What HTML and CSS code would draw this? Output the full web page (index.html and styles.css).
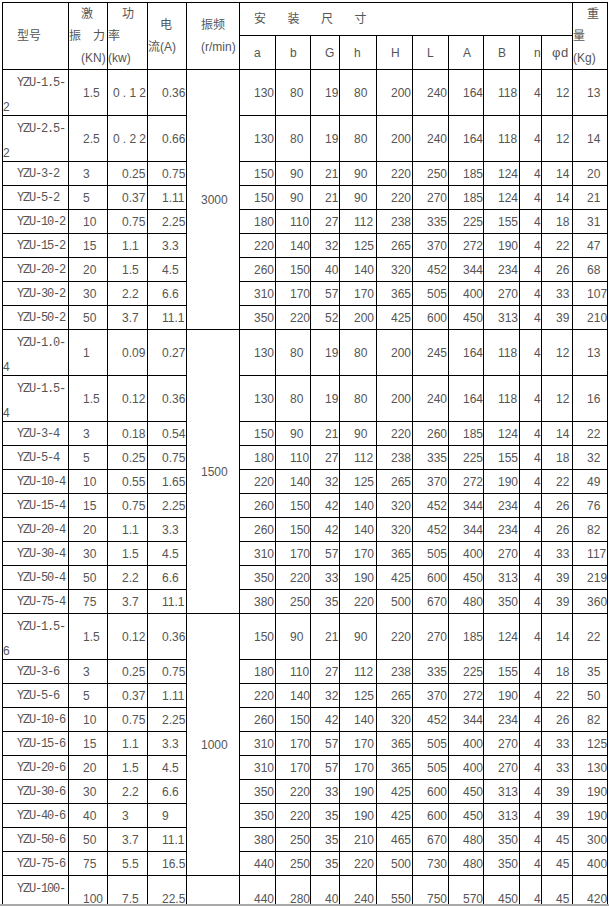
FILE: index.html
```html
<!DOCTYPE html>
<html lang="zh-CN">
<head>
<meta charset="utf-8">
<title>YZU 振动电机技术参数</title>
<link rel="stylesheet" href="styles.css">
</head>
<body>
<div class="page">
<table class="spec">
<colgroup>
<col class="w66"><col class="w39"><col class="w40"><col class="w39"><col class="w53">
<col class="w36"><col class="w35"><col class="w29"><col class="w37"><col class="w36">
<col class="w36"><col class="w35"><col class="w36"><col class="w22"><col class="w31"><col class="w35">
</colgroup>
<thead>
<tr class="h1">
<th rowspan="2" class="ml"><div class="i14">型号</div></th>
<th rowspan="2" class="ml"><div class="i12">激</div><div>振　力</div><div class="i12">(KN)</div></th>
<th rowspan="2" class="ml"><div class="i14">功</div><div>率</div><div>(kw)</div></th>
<th rowspan="2" class="ml"><div class="i12">电</div><div>流(A)</div></th>
<th rowspan="2" class="ml"><div class="i14">振频</div><div class="i14">(r/min)</div></th>
<th colspan="10" class="wide">安装尺寸</th>
<th rowspan="2" class="ml"><div class="i14">重</div><div>量</div><div>(Kg)</div></th>
</tr>
<tr class="h2">
<th>a</th><th>b</th><th>G</th><th>h</th><th>H</th><th>L</th><th>A</th><th>B</th><th>n</th><th class="phi">φd</th>
</tr>
</thead>
<tbody>
<tr class="d"><td class="m"><div class="two">YZU-1.5-<br><span class="a">2</span></div></td><td>1.5</td><td class="ls">0.12</td><td>0.36</td><td rowspan="9">3000</td><td>130</td><td>80</td><td>19</td><td>80</td><td>200</td><td>240</td><td>164</td><td>118</td><td>4</td><td>12</td><td>13</td></tr>
<tr class="d"><td class="m"><div class="two">YZU-2.5-<br><span class="a">2</span></div></td><td>2.5</td><td class="ls">0.22</td><td>0.66</td><td>130</td><td>80</td><td>19</td><td>80</td><td>200</td><td>240</td><td>164</td><td>118</td><td>4</td><td>12</td><td>14</td></tr>
<tr class="s"><td class="m">YZU-3-2</td><td>3</td><td>0.25</td><td>0.75</td><td>150</td><td>90</td><td>21</td><td>90</td><td>220</td><td>250</td><td>185</td><td>124</td><td>4</td><td>14</td><td>20</td></tr>
<tr class="s"><td class="m">YZU-5-2</td><td>5</td><td>0.37</td><td>1.11</td><td>150</td><td>90</td><td>21</td><td>90</td><td>220</td><td>270</td><td>185</td><td>124</td><td>4</td><td>14</td><td>21</td></tr>
<tr class="s"><td class="m">YZU-10-2</td><td>10</td><td>0.75</td><td>2.25</td><td>180</td><td>110</td><td>27</td><td>112</td><td>238</td><td>335</td><td>225</td><td>155</td><td>4</td><td>18</td><td>31</td></tr>
<tr class="s"><td class="m">YZU-15-2</td><td>15</td><td>1.1</td><td>3.3</td><td>220</td><td>140</td><td>32</td><td>125</td><td>265</td><td>370</td><td>272</td><td>190</td><td>4</td><td>22</td><td>47</td></tr>
<tr class="s"><td class="m">YZU-20-2</td><td>20</td><td>1.5</td><td>4.5</td><td>260</td><td>150</td><td>40</td><td>140</td><td>320</td><td>452</td><td>344</td><td>234</td><td>4</td><td>26</td><td>68</td></tr>
<tr class="s"><td class="m">YZU-30-2</td><td>30</td><td>2.2</td><td>6.6</td><td>310</td><td>170</td><td>57</td><td>170</td><td>365</td><td>505</td><td>400</td><td>270</td><td>4</td><td>33</td><td>107</td></tr>
<tr class="s"><td class="m">YZU-50-2</td><td>50</td><td>3.7</td><td>11.1</td><td>350</td><td>220</td><td>52</td><td>200</td><td>425</td><td>600</td><td>450</td><td>313</td><td>4</td><td>39</td><td>210</td></tr>

<tr class="d"><td class="m"><div class="two">YZU-1.0-<br><span class="a">4</span></div></td><td>1</td><td>0.09</td><td>0.27</td><td rowspan="10">1500</td><td>130</td><td>80</td><td>19</td><td>80</td><td>200</td><td>245</td><td>164</td><td>118</td><td>4</td><td>12</td><td>13</td></tr>
<tr class="d"><td class="m"><div class="two">YZU-1.5-<br><span class="a">4</span></div></td><td>1.5</td><td>0.12</td><td>0.36</td><td>130</td><td>80</td><td>19</td><td>80</td><td>200</td><td>240</td><td>164</td><td>118</td><td>4</td><td>12</td><td>16</td></tr>
<tr class="s"><td class="m">YZU-3-4</td><td>3</td><td>0.18</td><td>0.54</td><td>150</td><td>90</td><td>21</td><td>90</td><td>220</td><td>260</td><td>185</td><td>124</td><td>4</td><td>14</td><td>22</td></tr>
<tr class="s"><td class="m">YZU-5-4</td><td>5</td><td>0.25</td><td>0.75</td><td>180</td><td>110</td><td>27</td><td>112</td><td>238</td><td>335</td><td>225</td><td>155</td><td>4</td><td>18</td><td>32</td></tr>
<tr class="s"><td class="m">YZU-10-4</td><td>10</td><td>0.55</td><td>1.65</td><td>220</td><td>140</td><td>32</td><td>125</td><td>265</td><td>370</td><td>272</td><td>190</td><td>4</td><td>22</td><td>49</td></tr>
<tr class="s"><td class="m">YZU-15-4</td><td>15</td><td>0.75</td><td>2.25</td><td>260</td><td>150</td><td>42</td><td>140</td><td>320</td><td>452</td><td>344</td><td>234</td><td>4</td><td>26</td><td>76</td></tr>
<tr class="s"><td class="m">YZU-20-4</td><td>20</td><td>1.1</td><td>3.3</td><td>260</td><td>150</td><td>42</td><td>140</td><td>320</td><td>452</td><td>344</td><td>234</td><td>4</td><td>26</td><td>82</td></tr>
<tr class="s"><td class="m">YZU-30-4</td><td>30</td><td>1.5</td><td>4.5</td><td>310</td><td>170</td><td>57</td><td>170</td><td>365</td><td>505</td><td>400</td><td>270</td><td>4</td><td>33</td><td>117</td></tr>
<tr class="s"><td class="m">YZU-50-4</td><td>50</td><td>2.2</td><td>6.6</td><td>350</td><td>220</td><td>33</td><td>190</td><td>425</td><td>600</td><td>450</td><td>313</td><td>4</td><td>39</td><td>219</td></tr>
<tr class="s"><td class="m">YZU-75-4</td><td>75</td><td>3.7</td><td>11.1</td><td>380</td><td>250</td><td>35</td><td>220</td><td>500</td><td>670</td><td>480</td><td>350</td><td>4</td><td>39</td><td>360</td></tr>

<tr class="d"><td class="m"><div class="two">YZU-1.5-<br><span class="a">6</span></div></td><td>1.5</td><td>0.12</td><td>0.36</td><td rowspan="10">1000</td><td>150</td><td>90</td><td>21</td><td>90</td><td>220</td><td>270</td><td>185</td><td>124</td><td>4</td><td>14</td><td>22</td></tr>
<tr class="s"><td class="m">YZU-3-6</td><td>3</td><td>0.25</td><td>0.75</td><td>180</td><td>110</td><td>27</td><td>112</td><td>238</td><td>335</td><td>225</td><td>155</td><td>4</td><td>18</td><td>35</td></tr>
<tr class="s"><td class="m">YZU-5-6</td><td>5</td><td>0.37</td><td>1.11</td><td>220</td><td>140</td><td>32</td><td>125</td><td>265</td><td>370</td><td>272</td><td>190</td><td>4</td><td>22</td><td>50</td></tr>
<tr class="s"><td class="m">YZU-10-6</td><td>10</td><td>0.75</td><td>2.25</td><td>260</td><td>150</td><td>42</td><td>140</td><td>320</td><td>452</td><td>344</td><td>234</td><td>4</td><td>26</td><td>82</td></tr>
<tr class="s"><td class="m">YZU-15-6</td><td>15</td><td>1.1</td><td>3.3</td><td>310</td><td>170</td><td>57</td><td>170</td><td>365</td><td>505</td><td>400</td><td>270</td><td>4</td><td>33</td><td>125</td></tr>
<tr class="s"><td class="m">YZU-20-6</td><td>20</td><td>1.5</td><td>4.5</td><td>310</td><td>170</td><td>57</td><td>170</td><td>365</td><td>505</td><td>400</td><td>270</td><td>4</td><td>33</td><td>130</td></tr>
<tr class="s"><td class="m">YZU-30-6</td><td>30</td><td>2.2</td><td>6.6</td><td>350</td><td>220</td><td>33</td><td>190</td><td>425</td><td>600</td><td>450</td><td>313</td><td>4</td><td>39</td><td>190</td></tr>
<tr class="s"><td class="m">YZU-40-6</td><td>40</td><td>3</td><td>9</td><td>350</td><td>220</td><td>35</td><td>190</td><td>425</td><td>600</td><td>450</td><td>313</td><td>4</td><td>39</td><td>190</td></tr>
<tr class="s"><td class="m">YZU-50-6</td><td>50</td><td>3.7</td><td>11.1</td><td>380</td><td>250</td><td>35</td><td>210</td><td>465</td><td>670</td><td>480</td><td>350</td><td>4</td><td>45</td><td>300</td></tr>
<tr class="s"><td class="m">YZU-75-6</td><td>75</td><td>5.5</td><td>16.5</td><td>440</td><td>250</td><td>35</td><td>220</td><td>500</td><td>730</td><td>480</td><td>350</td><td>4</td><td>45</td><td>400</td></tr>
<tr class="d"><td class="m"><div class="two">YZU-100-<br><span class="a">6</span></div></td><td>100</td><td>7.5</td><td>22.5</td><td></td><td>440</td><td>280</td><td>40</td><td>240</td><td>550</td><td>750</td><td>570</td><td>450</td><td>4</td><td>45</td><td>420</td></tr>
</tbody>
</table>
</div>
</body>
</html>
```
FILE: styles.css
```css
html, body {
  margin: 0;
  padding: 0;
  background: #fff;
}

.page {
  box-sizing: border-box;
  height: 906px;
  padding: 2px 0 0 2px;
  overflow: hidden;
  border-bottom: 2px solid #a9a9a9;
}

.spec {
  border-collapse: collapse;
  table-layout: fixed;
  width: 606px;
  font: 12px/18px "Liberation Sans", "Noto Sans CJK SC", sans-serif;
  color: #555;
}

.w66 { width: 66px; }
.w53 { width: 53px; }
.w40 { width: 40px; }
.w39 { width: 39px; }
.w37 { width: 37px; }
.w36 { width: 36px; }
.w35 { width: 35px; }
.w31 { width: 31px; }
.w29 { width: 29px; }
.w22 { width: 22px; }

.spec th,
.spec td {
  border: 1px solid #000;
  padding: 0;
  text-indent: 14px;
  text-align: left;
  vertical-align: middle;
  font-weight: normal;
  white-space: nowrap;
}

.h1 { height: 33px; }
.h2 { height: 34px; }
.d { height: 46px; }
.s { height: 24px; }

.spec th.ml {
  text-indent: 0;
  line-height: 22px;
}

.i12 { padding-left: 12px; }
.i14 { padding-left: 14px; }

.spec th.wide {
  letter-spacing: 21.5px;
}

.spec th.phi {
  text-indent: 10px;
  font-family: "Liberation Sans", sans-serif;
  font-size: 13px;
  letter-spacing: 0.5px;
}

.spec td.m {
  font-family: "Liberation Mono", monospace;
  font-size: 12px;
  letter-spacing: -1.2px;
}

.two {
  height: 44px;
  line-height: 24px;
}

.m .a {
  font-family: "Liberation Sans", sans-serif;
  font-size: 12px;
  letter-spacing: 0;
}

.spec td.ls {
  text-indent: 5px;
  letter-spacing: 3.2px;
}
```
